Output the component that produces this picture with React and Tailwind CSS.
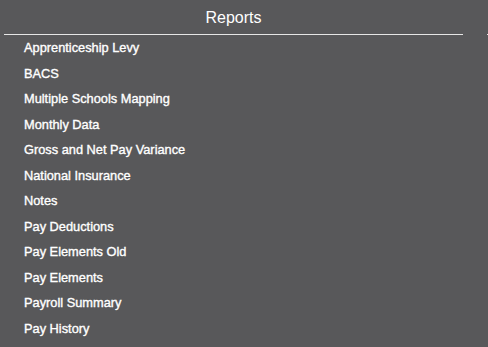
export default function App() {
  const items = [
    "Apprenticeship Levy",
    "BACS",
    "Multiple Schools Mapping",
    "Monthly Data",
    "Gross and Net Pay Variance",
    "National Insurance",
    "Notes",
    "Pay Deductions",
    "Pay Elements Old",
    "Pay Elements",
    "Payroll Summary",
    "Pay History",
  ];
  return (
    <div className="w-[488px] h-[347px] bg-[#58585a] overflow-hidden text-white" style={{ fontFamily: '"Liberation Sans", Arial, sans-serif' }}>
      <div className="flex items-end">
        <div className="ml-[4px] w-[459px] h-[35px] border-b border-[#e6e6e6] flex items-center justify-center pt-[1px] text-[16px]">
          Reports
        </div>
        <div className="ml-[24px] w-[1px] h-[1px] bg-[#e6e6e6]" />
      </div>
      <ul className="pl-[24px]">
        {items.map((t) => (
          <li key={t} className="h-[25.5px] leading-[25.5px] text-[12.8px] [-webkit-text-stroke:0.35px_white]">
            {t}
          </li>
        ))}
      </ul>
    </div>
  );
}
